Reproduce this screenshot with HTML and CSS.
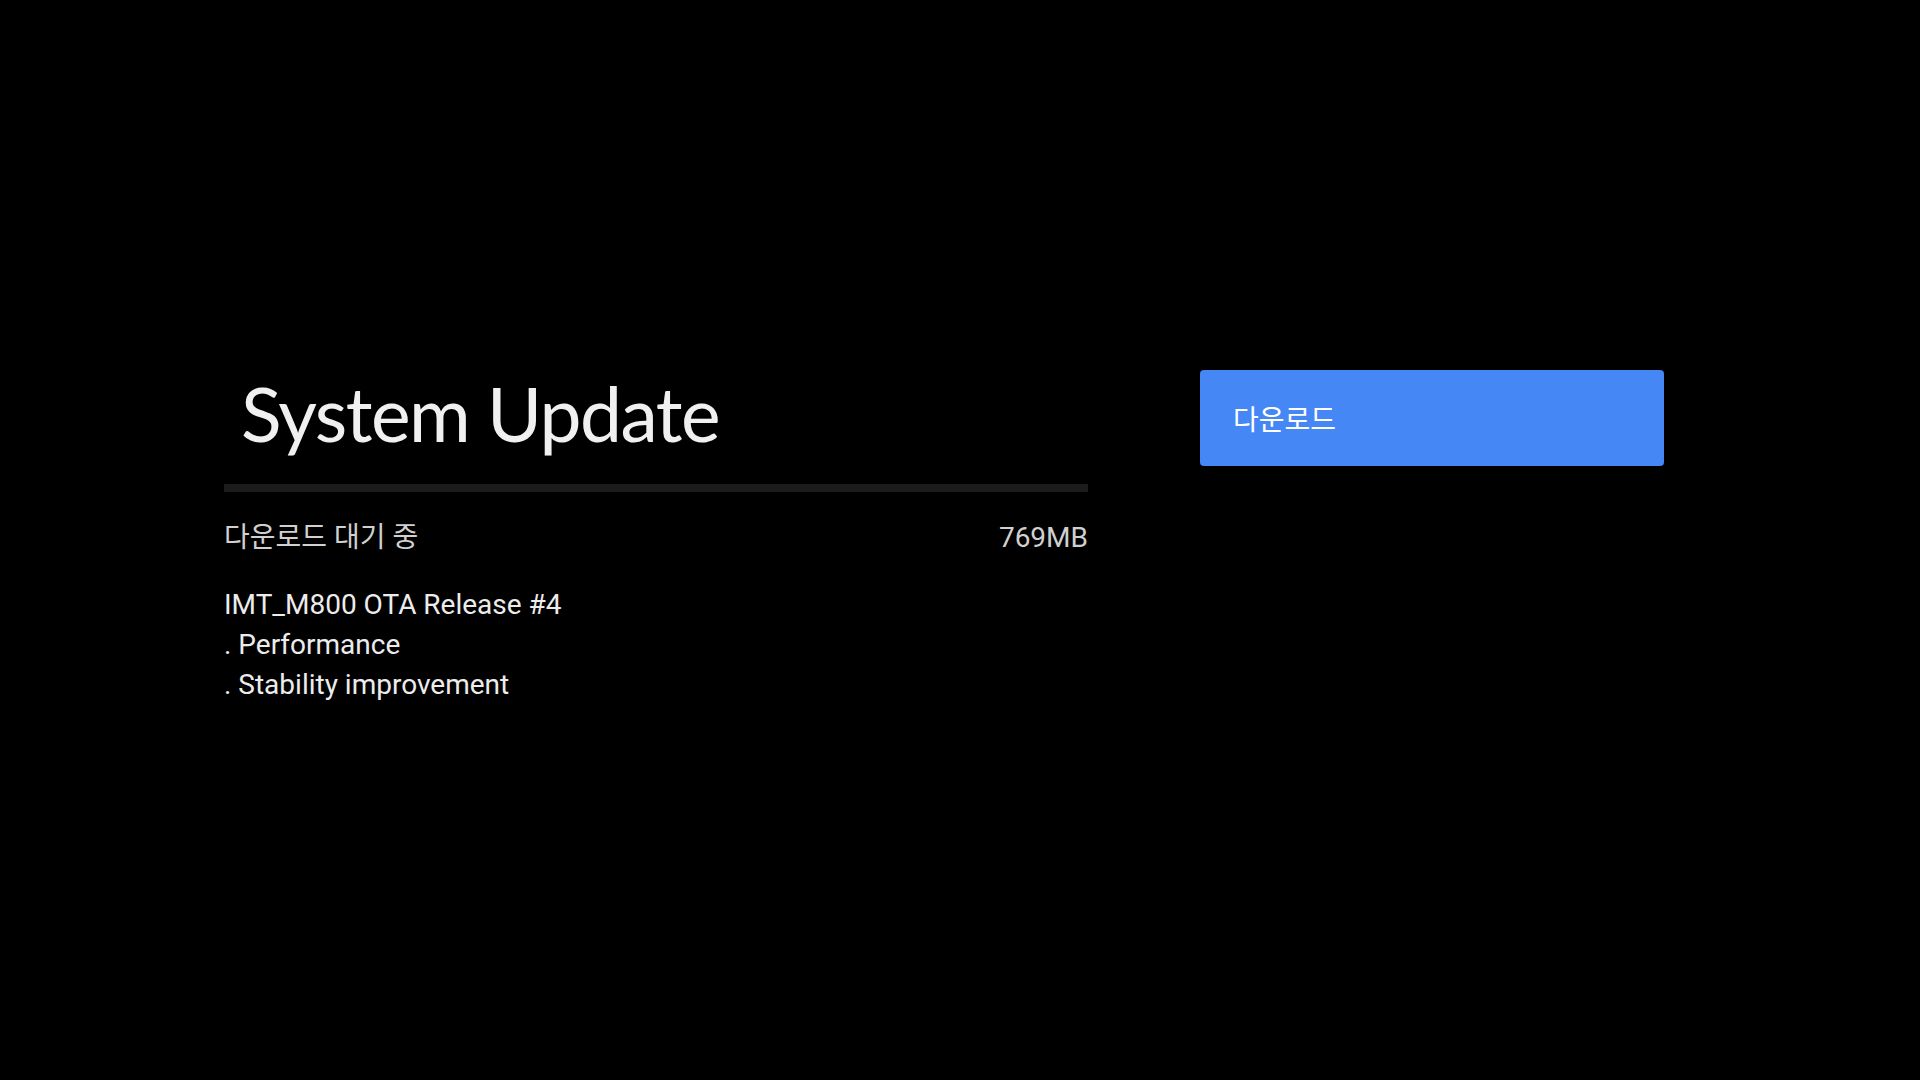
FILE: index.html
```html
<!DOCTYPE html>
<html lang="ko">
<head>
  <meta charset="UTF-8">
  <title>System Update</title>
  <link rel="stylesheet" href="styles.css">
</head>
<body>
  <div class="page">
    <div class="main">
      <h1 class="title">System Update</h1>
      <div class="progress"><div class="progress-fill" style="width: 0%"></div></div>
      <div class="status">
        <span class="status-text">다운로드 대기 중</span>
        <span class="status-size">769MB</span>
      </div>
      <div class="notes">
        <p>IMT_M800 OTA Release #4</p>
        <p>. Performance</p>
        <p>. Stability improvement</p>
      </div>
    </div>
    <div class="side">
      <button class="action-btn">다운로드</button>
    </div>
  </div>
</body>
</html>
```

FILE: styles.css
```css
html, body {
  margin: 0;
  height: 100%;
  background-color: #000;
}
body {
  font-family: Roboto, 'Noto Sans CJK KR', sans-serif;
  color: #e8e8e8;
}
.page {
  display: flex;
  gap: 112px;
  padding: 363px 0 0 224px;
}
.main {
  width: 864px;
}
.title {
  font-family: Lato, sans-serif;
  font-weight: 400;
  font-size: 75px;
  letter-spacing: -1.5px;
  line-height: 100px;
  margin: 0;
  padding-left: 17px;
  color: #f0f0f0;
}
.progress {
  height: 8px;
  margin-top: 21px;
  background-color: #1c1c1c;
}
.progress-fill {
  height: 100%;
  background-color: #4285f4;
}
.status {
  display: flex;
  justify-content: space-between;
  margin-top: 28px;
  font-size: 28px;
  line-height: 36px;
  color: #d0d0d0;
}
.notes {
  margin-top: 29px;
  font-size: 28px;
  line-height: 40px;
  color: #ececec;
}
.notes p {
  margin: 0;
}
.side {
  padding-top: 7px;
}
.action-btn {
  display: block;
  width: 464px;
  height: 96px;
  padding: 0 0 0 33px;
  border: none;
  border-radius: 4px;
  background-color: #4587f5;
  color: #fff;
  font-family: Roboto, 'Noto Sans CJK KR', sans-serif;
  font-size: 28px;
  text-align: left;
  cursor: pointer;
}
```
